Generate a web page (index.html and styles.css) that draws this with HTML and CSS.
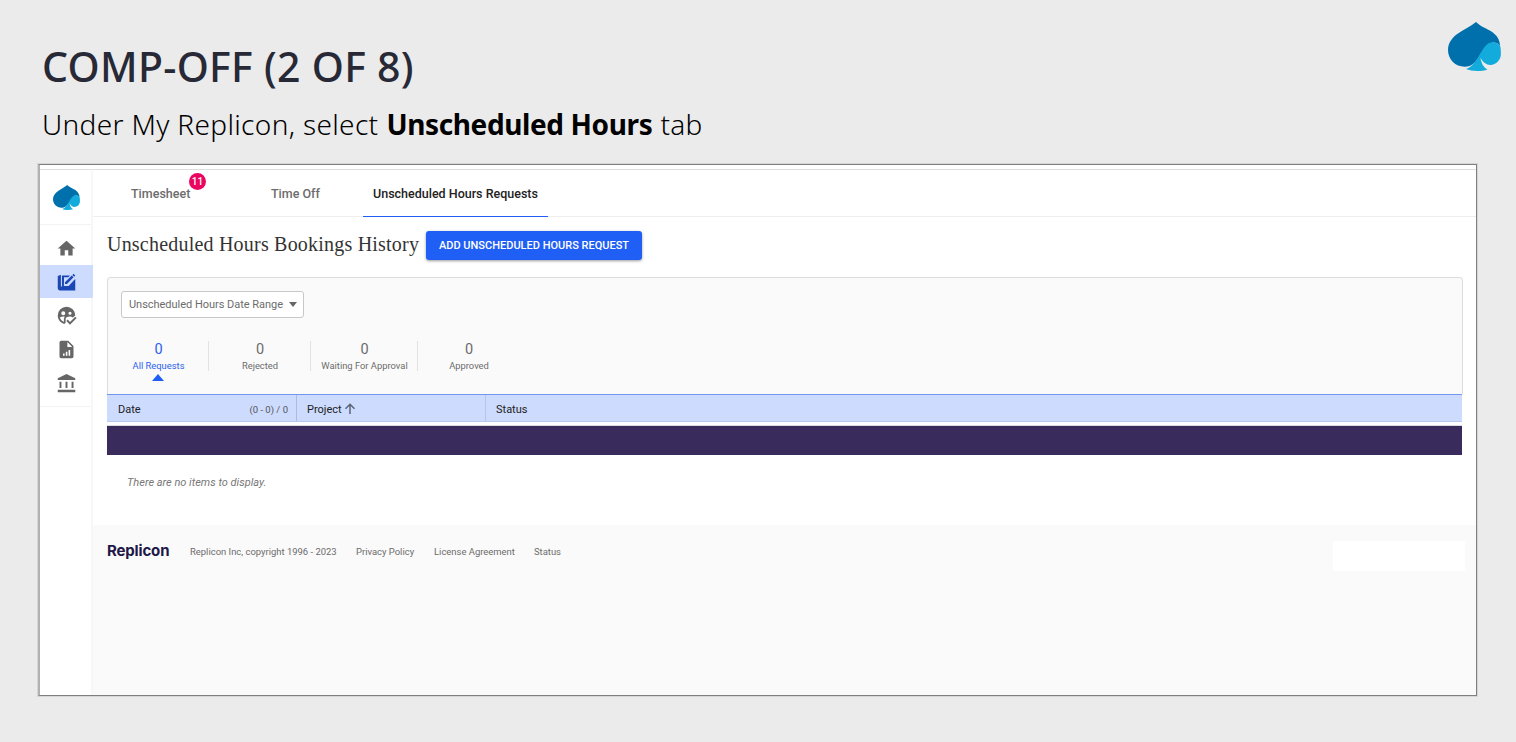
FILE: index.html
```html
<!DOCTYPE html>
<html lang="en">
<head>
<meta charset="utf-8">
<title>Comp-Off (2 of 8)</title>
<link rel="stylesheet" href="styles.css">
</head>
<body>
<svg width="0" height="0" class="defs">
  <symbol id="spade" viewBox="0 0 53 49">
    <path fill="#0070ad" d="M28 0C23 4.200 16 7.500 10 11.500 4 15.500 0 21 0 28 0 37.500 7.500 44.700 16.500 44.700c4 0 7.500-1.200 10.500-4.500C34 35 36.500 22.500 45 20.600c3 0 5.500 1 7.200 3.400C51.500 13 43.500 9.500 37.500 6.300 34 4.500 30.500 2.500 28 0z"/>
    <path fill="#12abdb" d="M52.200 24C50.500 21.500 47.500 20.300 44.500 20.300 36 20.300 32.500 34 26 41c-2 2.700-4.500 4.700-8 6 5.500 2.300 15 2.600 21.500.4-3.500-1.900-6.300-5.700-7-11.700 2.300 4.500 6.200 7.500 10.500 7.200 5.700-.4 9.900-5.200 9.900-11.100 0-3-.2-6-.7-7.800z"/>
  </symbol>
</svg>
<header class="slide-head">
  <div>
    <h1><span>COMP-OFF (2 OF 8)</span></h1>
    <p class="lead"><span class="l1">Under My Replicon, select</span><b>Unscheduled Hours</b><span class="l2">tab</span></p>
  </div>
  <svg class="brand"><use href="#spade"/></svg>
</header>
<main class="frame">
  <aside class="side">
    <div class="side-logo"><svg><use href="#spade"/></svg></div>
    <nav class="side-nav">
      <a><svg viewBox="0 0 24 24"><path d="M10 20v-6h4v6h5v-8h3L12 3 2 12h3v8z"/></svg></a>
      <a class="on"><svg viewBox="0 0 24 24"><path fill-rule="evenodd" d="M2 4.500 5.600 3.200V16.500H6.800V4H16l-2 2H9.200L9 16h5.500l5.500-6 2-2V21H4.300A2.300 2.300 0 0 1 2 18.700z"/><path d="M20 2l2 2-1.300 1.300-2-2zM18 4l2 2-7.500 7.800h-2.200v-2.200z"/></svg></a>
      <a><svg viewBox="0 0 24 24"><path fill-rule="evenodd" d="M12 2A10 10 0 0 0 2 12c0 4.700 3.300 8.700 7.700 9.700l1.300-1.800V15.500c0-1.200 2-2.500 4.500-2.500 1.600 0 2.800.5 3.700 1.200L22 12A10 10 0 0 0 12 2zM8.300 7.100a2.300 2.300 0 1 1 0 4.600 2.300 2.300 0 0 1 0-4.600zm7.700.5a1.800 1.800 0 1 1 0 3.600 1.800 1.800 0 0 1 0-3.600zM4.300 14.300c1.300-.9 3-1.300 4.700-1.200l1.200.2c-.8.700-1.200 1.500-1.200 2.500V19.400a8 8 0 0 1-4.700-5.100z"/><path d="M16 22.500 11.800 18.300l1.600-1.600 2.600 2.600 6-6 1.600 1.600z"/></svg></a>
      <a><svg viewBox="0 0 24 24"><path fill-rule="evenodd" d="M6 2a2 2 0 0 0-2 2v16c0 1.100.9 2 2 2h12a2 2 0 0 0 2-2V8l-6-6zm7 7V3.500L18.500 9zM8 16.500h1.800V19H8zm3.200-2H13V19h-1.800zm3.200-2h1.800V19h-1.800z"/></svg></a>
      <a><svg viewBox="0 0 24 24"><path d="M4 10v7h2.200v-7zm6.900 0v7h2.200v-7zM2 22h20v-3H2zm15.800-12v7H20v-7zM12 1 2 6v2h20V6z"/></svg></a>
    </nav>
  </aside>
  <section class="content">
    <nav class="tabs">
      <a class="t1"><span>Timesheet</span><i class="badge">11</i></a>
      <a class="t2"><span>Time Off</span></a>
      <a class="t3"><span>Unscheduled Hours Requests</span></a>
    </nav>
    <div class="title-row"><h2>Unscheduled Hours Bookings History</h2><button>ADD UNSCHEDULED HOURS REQUEST</button></div>
    <div class="panel">
      <div class="select"><span>Unscheduled Hours Date Range</span><i></i></div>
      <div class="stats">
        <div class="s1"><b>0</b><span>All Requests</span><i></i></div>
        <div class="s2"><b>0</b><span>Rejected</span></div>
        <div class="s3"><b>0</b><span>Waiting For Approval</span></div>
        <div class="s4"><b>0</b><span>Approved</span></div>
      </div>
    </div>
    <div class="thead">
      <div class="c1"><span>Date</span><small>(0 - 0) / 0</small></div>
      <div class="c2"><span>Project</span><svg viewBox="0 0 12 12"><path d="M6 11V1.500M1.500 5.800 6 1.300l4.500 4.500" fill="none" stroke="#5d6478" stroke-width="1.500"/></svg></div>
      <div class="c3"><span>Status</span></div>
    </div>
    <div class="band"></div>
    <p class="empty">There are no items to display.</p>
    <footer>
      <strong>Replicon</strong><span class="f1">Replicon Inc, copyright 1996 - 2023</span><a class="f2">Privacy Policy</a><a class="f3">License Agreement</a><a class="f4">Status</a>
      <div class="blank"></div>
    </footer>
  </section>
</main>
</body>
</html>
```

FILE: styles.css
```css
* { box-sizing: border-box; }
body { margin: 0; width: 1516px; height: 742px; overflow: hidden; background: #ebebeb; font-family: Roboto, sans-serif; color: #6c6c6c; padding: 0 39px 0 38px; }
h1, h2, p { margin: 0; font-weight: 400; }
.defs { display: block; position: absolute; }
.slide-head { height: 164px; display: flex; justify-content: space-between; padding: 22px 0 0 4px; }
h1 { font: 500 41px/56px "Noto Sans", sans-serif; color: #272936; margin-top: 16px; white-space: nowrap; letter-spacing: 0.3px; }
.lead { font: 300 28px/40px "Noto Sans", sans-serif; color: #000; margin-top: 10px; display: flex; white-space: nowrap; letter-spacing: 0.34px; }
.lead b { font-weight: 700; margin-left: 8px; letter-spacing: -0.38px; }
.lead .l2 { margin-left: 8px; }
.brand { width: 53px; height: 49px; margin-right: -24px; flex: none; }

.frame { height: 532px; background: #fff; border: 1px solid #7f7f7f; border-left: 2px solid #b1b1b1; box-shadow: 0 0 0 1px #d6d6d6; padding-top: 4px; display: flex; }
.side { width: 53px; flex: none; border-top: 1px solid #ddd; border-right: 2px solid #f7f7f7; }
.side-logo { height: 55px; border-bottom: 1px solid #f3f3f3; padding: 15px 0 0 13px; }
.side-logo svg { width: 27px; height: 25px; display: block; }
.side-nav { height: 182px; border-bottom: 1px solid #f3f3f3; padding-top: 6px; }
.side-nav a { display: flex; height: 33.700px; width: 53px; padding-top: 1px; align-items: center; justify-content: center; }
.side-nav svg { width: 21px; height: 21px; fill: #666; }
.side-nav .on { background: #cddbfe; }
.side-nav .on svg { fill: #1b47b5; }

.content { flex: 1; display: flex; flex-direction: column; border-top: 1px solid #ddd; min-width: 0; }
.tabs { height: 47px; border-bottom: 1px solid #eee; display: flex; flex: none; font: 500 12.500px/47px Roboto, sans-serif; padding-left: 38px; }
.tabs a { position: relative; height: 47px; white-space: nowrap; }
.t1 { width: 140px; }
.t2 { width: 92px; }
.t3 { width: 185px; padding-left: 10px; color: #222; border-bottom: 1px solid #1f5ff5; }
.badge { position: absolute; left: 58px; top: 3px; width: 17px; height: 17px; border-radius: 50%; background: #ea0660; color: #fff; font: 500 10px/17px Roboto, sans-serif; text-align: center; }
.title-row { display: flex; height: 60px; padding: 14px 0 0 14px; flex: none; }
h2 { font: 20px/26px "Liberation Serif", serif; color: #333; width: 319px; white-space: nowrap; letter-spacing: 0.21px; }
button { width: 216px; height: 29px; border: 0; border-radius: 3px; background: #1f5ff5; color: #fff; font: 500 11px/27px Roboto, sans-serif; padding: 0 0 1px; white-space: nowrap; box-shadow: 0 1px 3px rgba(0,0,0,.4); }
.panel { margin: 0 13px 0 14px; height: 117px; border: 1px solid #ddd; border-bottom: 0; border-radius: 4px 4px 0 0; background: #fafafa; padding: 13px 0 0 13px; flex: none; }
.select { width: 183px; height: 27px; border: 1px solid #c8c8c8; border-radius: 3px; background: #fff; display: flex; align-items: center; justify-content: space-between; padding: 0 6px 1px 7px; font-size: 11px; letter-spacing: -0.03px; white-space: nowrap; }
.select i { border: 4px solid transparent; border-top: 5px solid #666; border-bottom: 0; }
.stats { display: flex; margin-top: 23px; }
.stats div { height: 30px; display: flex; flex-direction: column; align-items: center; border-right: 1px solid #e2e2e2; position: relative; white-space: nowrap; }
.stats b { font: 400 14.500px/17px Roboto, sans-serif; }
.stats span { font-size: 9.400px; line-height: 15px; }
.stats .s1 { width: 88px; padding-right: 12px; color: #2b62ee; }
.stats .s2 { width: 102px; padding-left: 1px; }
.stats .s3 { width: 107px; padding-left: 1px; }
.stats .s4 { width: 102px; border: 0; }
.stats i { position: absolute; top: 33px; left: 31px; border: 6px solid transparent; border-top: 0; border-bottom: 7px solid #1f5ff5; }
.thead { margin: 0 14px 0 14px; height: 28px; background: #cddbfe; border-top: 1px solid #7096ee; border-bottom: 1px solid #b9c8ee; display: flex; flex: none; font: 11px/29px Roboto, sans-serif; color: #222; }
.c1 { width: 190px; border-right: 1px solid #acbbe4; padding: 0 8px 0 11px; display: flex; justify-content: space-between; }
.c1 small { font-size: 9.500px; color: #555; }
.c2 { width: 189px; border-right: 1px solid #b6c5ee; padding-left: 10px; display: flex; }
.c2 svg { width: 12px; height: 12px; margin: 8px 0 0 2px; }
.c3 { padding-left: 10px; }
.band { margin: 3px 14px 0; height: 30px; background: #3a2b5d; border-top: 1px solid #ddd; flex: none; }
.empty { height: 70px; padding: 18px 0 0 34px; font: italic 11px/20px Roboto, sans-serif; color: #777; }
footer { flex: 1; background: #fafafa; display: flex; align-items: flex-start; padding: 16px 11px 0 14px; font-size: 9.450px; line-height: 22px; white-space: nowrap; }
footer strong { font: 700 15px/20px Inter, sans-serif; color: #211747; width: 83px; letter-spacing: -0.15px; }
.f1 { width: 166px; }
.f2 { width: 78px; }
.f3 { width: 100px; }
.blank { width: 132px; height: 30px; background: #fff; margin-left: auto; }
```
